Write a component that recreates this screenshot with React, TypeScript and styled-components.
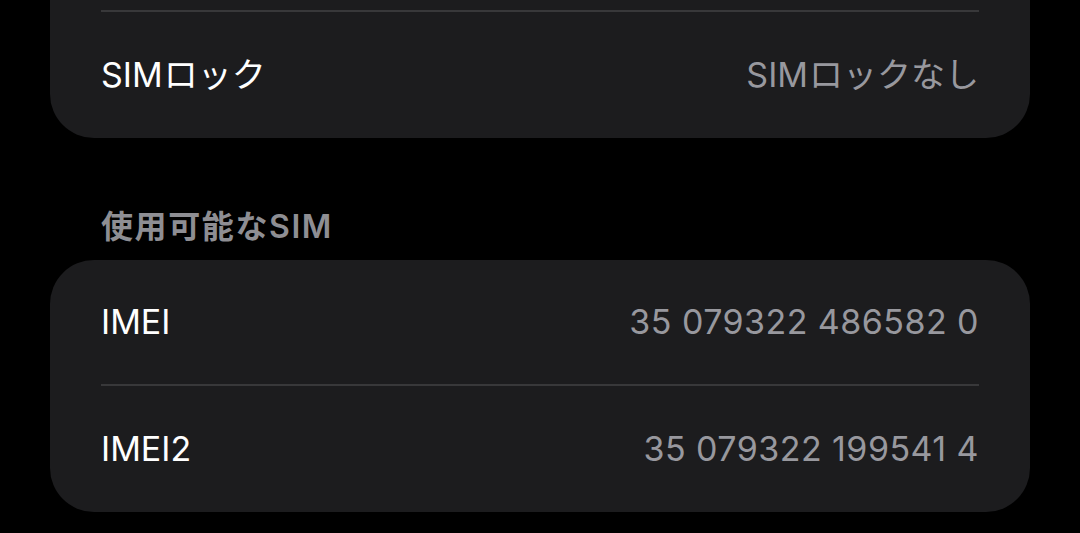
import React from "react";
import styled, { createGlobalStyle } from "styled-components";

const Global = createGlobalStyle`
  html, body { margin: 0; padding: 0; background: #000; }
  body {
    font-family: Inter, "Noto Sans CJK JP", "Noto Sans", sans-serif;
    -webkit-font-smoothing: antialiased;
  }
`;

const Page = styled.div`
  width: 1080px;
  height: 533px;
  overflow: hidden;
  background: #000;
  padding: 0 50px;
  box-sizing: border-box;
`;

const Card = styled.div<{ $cut?: boolean }>`
  background: #1c1c1e;
  border-radius: ${(p) => (p.$cut ? "0 0 44px 44px" : "44px")};
  padding: ${(p) => (p.$cut ? "10px 51px 0" : "0 51px")};
  display: flex;
  flex-direction: column;
`;

const Row = styled.div<{ $h: number }>`
  height: ${(p) => p.$h}px;
  display: flex;
  align-items: center;
  justify-content: space-between;
  font-size: 34px;
  line-height: 40px;
`;

const Label = styled.span`
  color: #fff;
`;

const Value = styled.span<{ $num?: boolean }>`
  color: #98989e;
  letter-spacing: ${(p) => (p.$num ? "0.45px" : "0")};
`;

const Latin = styled.span`
  margin-right: 1px;
`;

const Separator = styled.div`
  height: 2px;
  background: #38383a;
`;

const SectionHeader = styled.div`
  padding: 69px 0 13px 51px;
  line-height: 40px;
  font-size: 32px;
  font-weight: 600;
  letter-spacing: 1.6px;
  color: #8e8e93;
`;

export default function App() {
  return (
    <>
      <Global />
      <Page>
        <Card $cut>
          <Separator />
          <Row $h={126}>
            <Label>
              <Latin>SIM</Latin>ロック
            </Label>
            <Value>
              <Latin>SIM</Latin>ロックなし
            </Value>
          </Row>
        </Card>
        <SectionHeader>使用可能なSIM</SectionHeader>
        <Card>
          <Row $h={124}>
            <Label>IMEI</Label>
            <Value $num>35 079322 486582 0</Value>
          </Row>
          <Separator />
          <Row $h={126}>
            <Label>IMEI2</Label>
            <Value $num>35 079322 199541 4</Value>
          </Row>
        </Card>
      </Page>
    </>
  );
}
